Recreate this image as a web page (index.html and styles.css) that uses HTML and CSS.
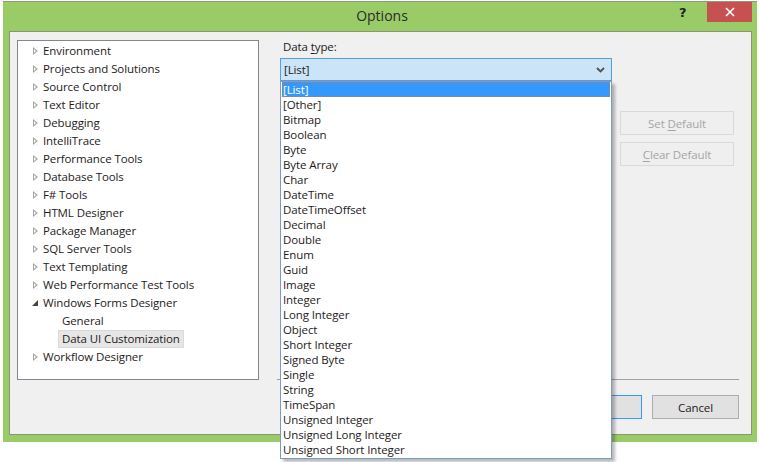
FILE: index.html
```html
<!DOCTYPE html>
<html>
<head>
<meta charset="utf-8">
<link rel="stylesheet" href="styles.css">
</head>
<body>
<div class="window">
  <div class="titlebar">
    <div class="title">Options</div>
    <div class="help">?</div>
    <div class="close"><svg width="10" height="10" viewBox="0 0 10 10"><path d="M1 1 L9 9 M9 1 L1 9" stroke="#fff" stroke-width="1.6"/></svg></div>
  </div>
  <div class="content">
    <div class="main">
      <div class="tree">
        <div class="node"><span class="arr"></span>Environment</div>
        <div class="node"><span class="arr"></span>Projects and Solutions</div>
        <div class="node"><span class="arr"></span>Source Control</div>
        <div class="node"><span class="arr"></span>Text Editor</div>
        <div class="node"><span class="arr"></span>Debugging</div>
        <div class="node"><span class="arr"></span>IntelliTrace</div>
        <div class="node"><span class="arr"></span>Performance Tools</div>
        <div class="node"><span class="arr"></span>Database Tools</div>
        <div class="node"><span class="arr"></span>F# Tools</div>
        <div class="node"><span class="arr"></span>HTML Designer</div>
        <div class="node"><span class="arr"></span>Package Manager</div>
        <div class="node"><span class="arr"></span>SQL Server Tools</div>
        <div class="node"><span class="arr"></span>Text Templating</div>
        <div class="node"><span class="arr"></span>Web Performance Test Tools</div>
        <div class="node"><span class="arr open"></span>Windows Forms Designer</div>
        <div class="node child"><span class="lbl">General</span></div>
        <div class="node child"><span class="lbl sel">Data UI Customization</span></div>
        <div class="node"><span class="arr"></span>Workflow Designer</div>
      </div>
      <div class="right">
        <div class="label">Data <u>t</u>ype:</div>
        <div class="combo-wrap">
          <div class="combo">
            <span>[List]</span>
            <svg class="chev" width="9" height="6" viewBox="0 0 9 6"><path d="M1 1 L4.5 4.5 L8 1" fill="none" stroke="#505050" stroke-width="1.8"/></svg>
          </div>
          <div class="dropdown">
            <div class="item selected">[List]</div>
            <div class="item">[Other]</div>
            <div class="item">Bitmap</div>
            <div class="item">Boolean</div>
            <div class="item">Byte</div>
            <div class="item">Byte Array</div>
            <div class="item">Char</div>
            <div class="item">DateTime</div>
            <div class="item">DateTimeOffset</div>
            <div class="item">Decimal</div>
            <div class="item">Double</div>
            <div class="item">Enum</div>
            <div class="item">Guid</div>
            <div class="item">Image</div>
            <div class="item">Integer</div>
            <div class="item">Long Integer</div>
            <div class="item">Object</div>
            <div class="item">Short Integer</div>
            <div class="item">Signed Byte</div>
            <div class="item">Single</div>
            <div class="item">String</div>
            <div class="item">TimeSpan</div>
            <div class="item">Unsigned Integer</div>
            <div class="item">Unsigned Long Integer</div>
            <div class="item">Unsigned Short Integer</div>
          </div>
        </div>
        <div class="side-buttons">
          <div class="btn disabled"><span>Set <u>D</u>efault</span></div>
          <div class="btn disabled"><span><u>C</u>lear Default</span></div>
        </div>
        <div class="separator"></div>
      </div>
    </div>
    <div class="footer">
      <div class="btn big focused"><span>OK</span></div>
      <div class="btn big"><span>Cancel</span></div>
    </div>
  </div>
</div>
</body>
</html>
```
FILE: styles.css
```css
* { box-sizing: border-box; }
html, body { margin: 0; padding: 0; background: #ffffff; }
body {
  font-family: "Open Sans", "Noto Sans", sans-serif;
  font-size: 11.5px;
  letter-spacing: -0.1px;
  color: #1e1a1a;
  height: 462px;
  overflow: hidden;
}
.window {
  margin: 1px 0 0 3px;
  width: 754px;
  height: 441px;
  background: #99cc66;
  border-top: 1px solid #8a9a7a;
  display: flex;
  flex-direction: column;
  padding: 0 5px 7px 6px;
}
.titlebar {
  height: 29px;
  display: flex;
  align-items: flex-start;
}
.title {
  flex: 1;
  text-align: center;
  font-size: 14px;
  letter-spacing: 0;
  color: #2b2b2b;
  padding-top: 4px;
  padding-left: 76px;
}
.help {
  font-family: "DejaVu Sans", sans-serif;
  font-weight: bold;
  font-size: 13px;
  color: #222;
  width: 16px;
  margin-top: 3px;
  margin-right: 12px;
}
.close {
  width: 45px;
  height: 20px;
  background: #c75050;
  display: flex;
  align-items: center;
  justify-content: center;
}
.content {
  flex: 1;
  background: #f0f0f0;
  border: 1px solid #8e9377;
  padding: 8px 12px 0 7px;
  display: flex;
  flex-direction: column;
}
.main {
  display: flex;
  height: 340px;
}
.tree {
  width: 242px;
  height: 340px;
  background: #fff;
  border: 1px solid #828790;
  padding-top: 1px;
}
.node {
  height: 18px;
  line-height: 18px;
  display: flex;
  align-items: center;
  padding-left: 14px;
  white-space: nowrap;
}
.arr {
  width: 11px;
  height: 8px;
  position: relative;
  flex: none;
}
.arr::before {
  content: "";
  position: absolute;
  left: 1px;
  top: 0;
  width: 0;
  height: 0;
  border-left: 5px solid #a6a6a6;
  border-top: 4px solid transparent;
  border-bottom: 4px solid transparent;
}
.arr::after {
  content: "";
  position: absolute;
  left: 2px;
  top: 2px;
  width: 0;
  height: 0;
  border-left: 2.5px solid #fff;
  border-top: 2px solid transparent;
  border-bottom: 2px solid transparent;
}
.arr.open::before {
  left: 0;
  top: 1px;
  border: none;
  border-right: 6px solid #444;
  border-top: 6px solid transparent;
}
.arr.open::after { display: none; }
.child { padding-left: 40px; }
.lbl {
  padding: 0 3px;
  height: 18px;
  line-height: 16px;
  border: 1px solid transparent;
}
.lbl.sel {
  background: #e6e6e6;
  border-color: #dadada;
}
.right {
  flex: 1;
  display: flex;
  flex-direction: column;
  margin-left: 21px;
}
.label {
  height: 18px;
  line-height: 14px;
  padding-left: 3px;
}
.label u, .btn u { text-underline-offset: 2px; }
.combo-wrap {
  position: relative;
  width: 332px;
}
.combo {
  height: 23px;
  background: #cce4f7;
  border: 1px solid #569de5;
  display: flex;
  align-items: center;
  justify-content: space-between;
  padding: 0 6px 0 3px;
}
.chev { margin-top: 1px; }
.dropdown {
  position: absolute;
  left: 0;
  top: 23px;
  width: 332px;
  background: #fff;
  border: 1px solid #7a9bc9;
  box-shadow: 3px 3px 3px rgba(0, 0, 0, 0.28);
  padding: 0 1px 1px 1px;
  z-index: 5;
}
.item {
  height: 15px;
  line-height: 15px;
  padding-left: 1px;
  white-space: nowrap;
}
.item.selected {
  background: #3399ff;
  color: #fff;
  outline: 1px dotted #c87a3a;
  outline-offset: -1px;
}
.side-buttons {
  align-self: flex-end;
  margin-right: 5px;
  margin-top: 30px;
  display: flex;
  flex-direction: column;
  gap: 7px;
}
.btn {
  width: 114px;
  height: 24px;
  display: flex;
  align-items: center;
  justify-content: center;
  border: 1px solid #adadad;
  background: #e1e1e1;
}
.btn.disabled {
  background: #efefef;
  border-color: #d9d9d9;
  color: #a5a5a5;
}
.separator {
  margin-top: auto;
  margin-left: -3px;
  height: 1px;
  background: #a0a0a0;
}
.footer {
  display: flex;
  justify-content: flex-end;
  gap: 10px;
  margin-top: 15px;
}
.btn.big { width: 87px; }
.btn.focused { border-color: #3399ff; }
```
